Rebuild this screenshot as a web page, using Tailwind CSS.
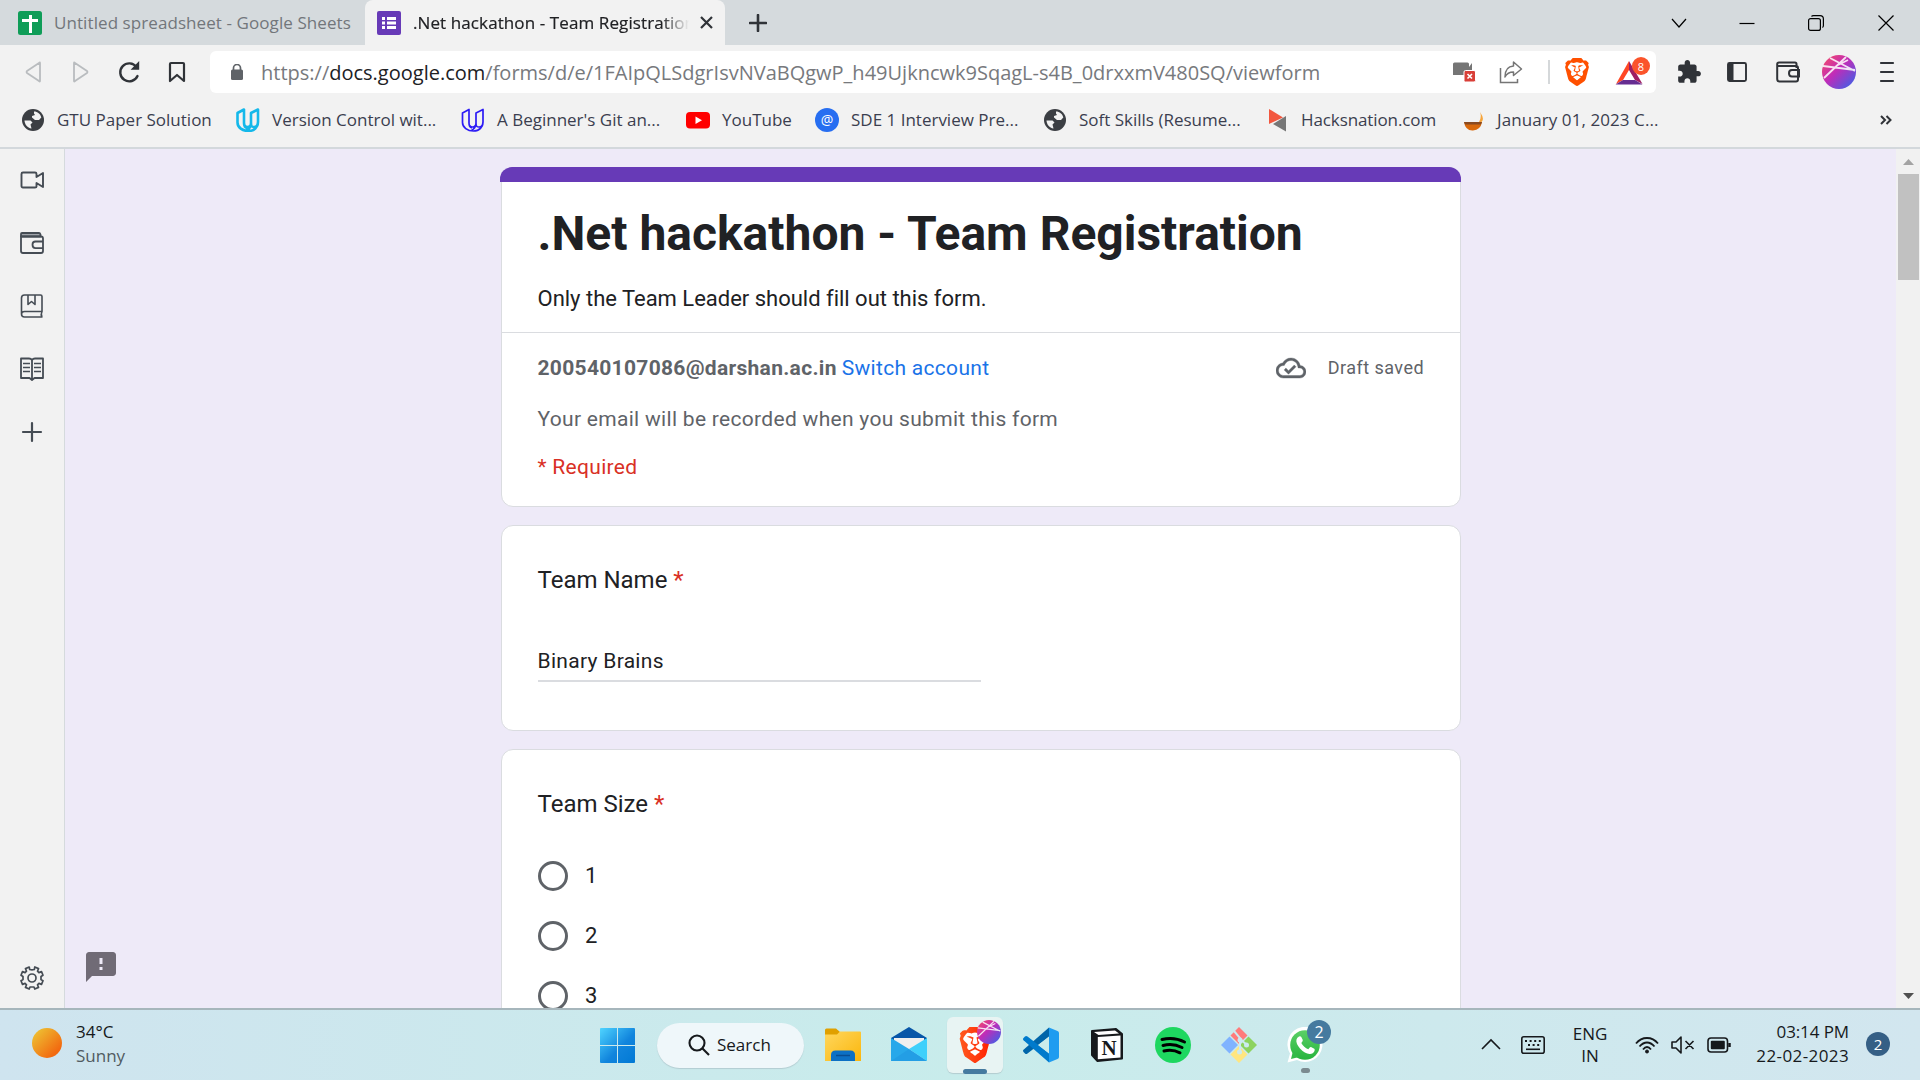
<!DOCTYPE html>
<html lang="en">
<head>
<meta charset="utf-8">
<title>.Net hackathon - Team Registration</title>
<script src="https://cdn.jsdelivr.net/npm/@tailwindcss/browser@4"></script>
</head>
<body class="h-[1080px] w-[1920px] overflow-hidden font-['Open_Sans','Noto_Sans',sans-serif] text-[#3b3e4f]">
<svg class="absolute h-0 w-0">
  <defs>
    <linearGradient id="av" x1="0" y1="0" x2="1" y2="1"><stop offset="0" stop-color="#fa4d60"/><stop offset=".45" stop-color="#c02cb8"/><stop offset="1" stop-color="#2c68ee"/></linearGradient>
    <linearGradient id="br" x1="0" x2="1"><stop offset="0" stop-color="#ff5a1f"/><stop offset="1" stop-color="#ff2000"/></linearGradient>
    <linearGradient id="sun" x1="0" y1="0" x2="1" y2="1"><stop offset=".1" stop-color="#eec032"/><stop offset=".8" stop-color="#f26a10"/></linearGradient>
    <linearGradient id="win" x1="0" y1="0" x2="36" y2="36" gradientUnits="userSpaceOnUse"><stop offset="0" stop-color="#4fd4ff"/><stop offset=".55" stop-color="#1185dd"/><stop offset="1" stop-color="#0078d4"/></linearGradient>
    <linearGradient id="fold" x1="0" y1="0" x2="1" y2="1"><stop offset="0" stop-color="#ffd75e"/><stop offset="1" stop-color="#fbb60c"/></linearGradient>
    <linearGradient id="wa" x1="0" y1="0" x2="0" y2="1"><stop offset="0" stop-color="#5bd066"/><stop offset="1" stop-color="#27b43e"/></linearGradient>
  </defs>
  <symbol id="lion" viewBox="0 0 24 24"><path fill="#fff" d="M5 4h14l1.500 5-3 9-5.500 3-5.500-3-3-9z"/><path d="M15.68 0l2.096 2.38s1.84-.512 2.709.358c.868.87 1.584 1.638 1.584 1.638l-.562 1.381.715 2.047s-2.104 7.98-2.35 8.955c-.486 1.919-.818 2.66-2.198 3.633-1.38.972-3.884 2.66-4.293 2.916-.409.256-.92.692-1.38.692-.46 0-.97-.436-1.38-.692a185.796 185.796 0 01-4.293-2.916c-1.38-.973-1.712-1.714-2.197-3.633-.247-.975-2.351-8.955-2.351-8.955l.715-2.047-.562-1.381s.716-.768 1.585-1.638c.868-.87 2.708-.358 2.708-.358L8.321 0h7.36zm-3.679 14.936c-.14 0-1.038.317-1.758.69-.72.373-1.242.637-1.409.742-.167.104-.065.301.087.409.152.107 2.194 1.69 2.393 1.866.198.175.489.464.687.464.198 0 .49-.29.688-.464.198-.175 2.24-1.759 2.392-1.866.152-.108.254-.305.087-.41-.167-.104-.689-.368-1.41-.741-.72-.373-1.617-.69-1.757-.69zm0-11.278s-.409.001-1.022.206-1.278.46-1.584.46c-.307 0-2.581-.434-2.581-.434S4.119 7.152 4.119 7.849c0 .697.339.881.68 1.243l2.02 2.149c.192.203.59.511.356 1.066-.235.555-.58 1.26-.196 1.977.384.716 1.042 1.194 1.464 1.115.421-.08 1.412-.598 1.776-.834.364-.237 1.518-1.19 1.518-1.554 0-.365-1.193-1.02-1.413-1.168-.22-.15-1.226-.725-1.247-.95-.02-.227-.012-.293.284-.851.297-.559.831-1.304.742-1.8-.089-.495-.95-.753-1.565-.986-.615-.232-1.799-.671-1.947-.74-.148-.068-.11-.133.339-.175.448-.043 1.719-.212 2.292-.052.573.16 1.552.403 1.632.532.079.13.149.134.067.579-.081.445-.5 2.581-.541 2.96-.04.38-.12.63.288.724.409.094 1.097.256 1.333.256s.924-.162 1.333-.256c.408-.093.329-.344.288-.723-.04-.38-.46-2.516-.541-2.961-.082-.445-.012-.45.067-.579.08-.129 1.059-.372 1.632-.532.573-.16 1.845.009 2.292.052.449.042.487.107.339.175-.148.069-1.332.508-1.947.74-.615.233-1.476.49-1.565.986-.09.496.445 1.241.742 1.8.297.558.304.624.284.85-.02.226-1.026.802-1.247.95-.22.15-1.413.804-1.413 1.169 0 .364 1.154 1.317 1.518 1.554.364.236 1.355.755 1.776.834.422.079 1.08-.4 1.464-1.115.384-.716.039-1.422-.195-1.977-.235-.555.163-.863.355-1.066l2.02-2.149c.341-.362.68-.546.68-1.243 0-.697-2.695-3.96-2.695-3.96s-2.274.436-2.58.436c-.307 0-.972-.256-1.585-.461-.613-.205-1.022-.206-1.022-.206z"/></symbol>
  <symbol id="avatar" viewBox="0 0 34 34"><circle cx="17" cy="17" r="17" fill="url(#av)"/><path d="M2 23 24 2M8 3l25 13M1 11l32 4M14 11l12-6" stroke="#fff" stroke-opacity=".85" stroke-width="1.800" fill="none"/></symbol>
  <symbol id="globe" viewBox="0 0 24 24"><circle cx="12" cy="12" r="11" fill="#3b3e43"/><path d="M3.500 12.500h6l2 2-2 2 1 4C6.500 20 3.700 16.500 3.500 12.500zM13 3.500c3.500 0 6.500 2.500 7.300 6L18 12h-4l-3-2.500V8l3-1-1-1.500z" fill="#f2f2f2"/></symbol>
  <symbol id="udemy" viewBox="0 0 24 24"><path d="M1.500 5 8 1.500V15c0 2.500 1.500 4 3.500 4s3.500-1.500 3.500-4V5l7-3.500V14c0 5-3.500 9-9.500 9S1.500 19.500 1.500 14.500zM15 5v10c0 4-2 6-4.500 7.500M8 15c0 3 1 4.500 3 5M22 14c0 3-1.500 5-4 5s-3-1-3-4" fill="none" stroke="currentColor" stroke-linejoin="round"/></symbol>
</svg>
<div class="flex h-full flex-col">
  <!-- tab strip -->
  <div class="flex h-[45px] shrink-0 items-center bg-[#d5dadd]">
    <div class="flex h-full w-[365px] items-center pl-[18px]">
      <svg class="h-6 w-6 shrink-0" viewBox="0 0 24 24"><rect width="24" height="24" rx="2.500" fill="#0f9d58"/><path d="M11 4h3v4h6v3h-6v11h-3V11H4V8h7z" fill="#fff"/></svg>
      <span class="ml-3 w-[300px] text-[17px] tracking-[0.08px] whitespace-nowrap text-[#72767b]">Untitled spreadsheet - Google Sheets</span>
    </div>
    <div class="flex h-full w-[360px] items-center rounded-t-lg bg-[#f2f2f2] pl-3">
      <svg class="h-6 w-6 shrink-0" viewBox="0 0 24 24"><rect width="24" height="24" rx="2" fill="#673ab7"/><path d="M5 6h3v3H5zm5 0h9v3h-9zM5 10.500h3v3H5zm5 0h9v3h-9zM5 15h3v3H5zm5 0h9v3h-9z" fill="#fff"/></svg>
      <div class="ml-3 w-[276px] overflow-hidden mask-r-from-90% mask-r-to-100%"><span class="text-[17px] tracking-[0.1px] whitespace-nowrap text-[#202124] [-webkit-text-stroke:0.2px]">.Net hackathon - Team Registration</span></div>
      <svg class="ml-[10px] h-[15px] w-[15px]" viewBox="0 0 15 15" stroke="#303338" stroke-width="2.200"><path d="m2 2 11 11M13 2 2 13"/></svg>
    </div>
    <svg class="ml-6 h-[18px] w-[18px]" viewBox="0 0 18 18" stroke="#303338" stroke-width="2.600" stroke-linecap="round"><path d="M9 1v16M1 9h16"/></svg>
    <div class="ml-auto flex items-center pr-[26px] text-black">
      <svg class="mr-[52px] h-4 w-4" viewBox="0 0 16 16" fill="none" stroke="#000" stroke-width="1.200"><path d="m1 4 7 8 7-8"/></svg>
      <svg class="mr-[53px] h-4 w-4" viewBox="0 0 16 16" stroke="#000" stroke-width="1.200"><path d="M.5 8.500h15"/></svg>
      <svg class="mr-[54px] h-4 w-4" viewBox="0 0 16 16" fill="none" stroke="#000" stroke-width="1.200"><rect x=".6" y="3.600" width="11.800" height="11.800" rx="2"/><path d="M3.500 1.600Q4 .6 5.500.6H12Q15.400.6 15.400 4v6.500q0 1.500-1 2"/></svg>
      <svg class="h-4 w-4" viewBox="0 0 16 16" stroke="#000" stroke-width="1.200"><path d="m.5.500 15 15M15.500.5l-15 15"/></svg>
    </div>
  </div>
  <!-- toolbar -->
  <div class="flex h-[54px] shrink-0 items-center bg-[#f2f2f2]">
    <div class="flex w-[210px] items-center gap-6 pl-[21px]">
      <svg class="h-6 w-6" viewBox="0 0 24 24" fill="none" stroke="#b9bcbf" stroke-width="1.800" stroke-linejoin="round"><path d="M19 3v18q0 1-1 0L6 13q-1-1 0-2L18 3q1-1 1 0z"/></svg>
      <svg class="h-6 w-6" viewBox="0 0 24 24" fill="none" stroke="#b9bcbf" stroke-width="1.800" stroke-linejoin="round"><path d="M5 3v18q0 1 1 0l12-8q1-1 0-2L6 3Q5 2 5 3z"/></svg>
      <svg class="h-6 w-6" viewBox="0 0 24 24" fill="none" stroke="#303338" stroke-width="2.400" stroke-linecap="round"><path d="M20.500 16A9 9 0 1 1 19.500 7"/><path d="M21 4v4.500h-4.500z" fill="#303338"/></svg>
      <svg class="h-6 w-6" viewBox="0 0 24 24" fill="none" stroke="#303338" stroke-width="2.200" stroke-linejoin="round"><path d="M5 4q0-1 1-1h12q1 0 1 1v17l-7-6-7 6z"/></svg>
    </div>
    <div class="flex h-[42px] w-[1446px] items-center rounded-md bg-white">
      <svg class="ml-[19px] h-4 w-4" viewBox="0 0 16 16"><rect x="2" y="5.500" width="12" height="10.500" rx="1.500" fill="#5f6368"/><path d="M4.500 7V4a3.500 3.500 0 0 1 7 0v3" fill="none" stroke="#5f6368" stroke-width="1.700"/></svg>
      <span class="ml-4 w-[1191px] pt-[2px] text-[20px] whitespace-nowrap text-[#77797d]">https://<span class="text-[#202124]">docs.google.com</span>/forms/d/e/1FAIpQLSdgrIsvNVaBQgwP_h49Ujkncwk9SqagL-s4B_0drxxmV480SQ/viewform</span>
      <svg class="h-6 w-6" viewBox="0 0 24 24"><path d="M1 4Q1 2.500 2.500 2.500h13Q17 2.500 17 4v3l3-4v12H1z" fill="#757575"/><rect x="12" y="10.500" width="11.500" height="11.500" rx="1.500" fill="#d93f38" stroke="#fff"/><path d="m15.500 14 4.500 4.500m0-4.500-4.500 4.500" stroke="#fff" stroke-width="1.600"/></svg>
      <svg class="ml-[23px] h-6 w-6" viewBox="0 0 24 24" fill="none" stroke="#757575" stroke-width="1.500"><path d="M1.500 8v14.500h17V19"/><path d="M14.500 2 22.500 9l-8 6.500V12Q8.500 12 6 17q0-10.500 8.500-11z" stroke-linejoin="round"/></svg>
      <div class="ml-[25px] h-6 w-[2px] bg-[#d5d8da]"></div>
      <svg class="ml-[13px] h-[28px] w-[28px]" viewBox="0 0 24 24" fill="#ff5000"><use href="#lion"/></svg>
      <div class="relative ml-[23px] h-[30px] w-[36px]">
        <svg class="h-[30px] w-[30px]" viewBox="0 0 30 30"><path d="M15 4v9l-6 10-7 4z" fill="#ff4724"/><path d="M15 4l13.500 23-7.500-4-6-10z" fill="#9e1f63"/><path d="M1.500 27.500h27L21 23H9z" fill="#662d91"/></svg>
        <span class="absolute top-0 left-[18px] flex h-[18px] w-[18px] items-center justify-center rounded-full bg-[#fb542b] text-[11px] leading-none text-white">8</span>
      </div>
    </div>
    <div class="flex items-center pl-[20px]">
      <svg class="h-[26px] w-[26px]" viewBox="0 0 24 24" fill="#303338"><path d="M20.500 11H19V7c0-1.100-.9-2-2-2h-4V3.500C13 2.120 11.880 1 10.500 1S8 2.120 8 3.500V5H4c-1.100 0-1.990.9-1.990 2v3.800H3.500c1.490 0 2.700 1.210 2.700 2.700s-1.210 2.700-2.700 2.700H2V20c0 1.100.9 2 2 2h3.800v-1.500c0-1.490 1.210-2.700 2.700-2.700 1.490 0 2.700 1.210 2.700 2.700V22H17c1.100 0 2-.9 2-2v-4h1.500c1.380 0 2.500-1.120 2.500-2.500S21.880 11 20.500 11z"/></svg>
      <svg class="ml-[24px] h-[22px] w-[22px]" viewBox="0 0 22 22"><rect x="2" y="2" width="18" height="18" rx="1.500" fill="none" stroke="#303338" stroke-width="1.900"/><path d="M2 2h5.500v18H2z" fill="#303338"/></svg>
      <svg class="ml-[28px] h-6 w-6" viewBox="0 0 24 24" fill="none" stroke="#303338" stroke-width="2"><path d="M20.500 8V4q0-1.500-1.500-1.500H3Q1.200 2.500 1.200 4.200V19q0 2.500 2.500 2.500H20q2 0 2-2V8Q22 6 20 6H2"/><path d="M23 10h-7q-3 0-3 3.200t3 3.200h7z"/></svg>
      <svg class="ml-[22px] h-[34px] w-[34px]" viewBox="0 0 34 34"><use href="#avatar"/></svg>
      <svg class="ml-[23px] h-6 w-4" viewBox="0 0 16 24" stroke="#303338" stroke-width="2.200" stroke-linecap="round"><path d="M2 3h12M2 12h12M2 21h12" /></svg>
    </div>
  </div>
  <!-- bookmarks -->
  <div class="flex h-[50px] shrink-0 items-center gap-[25px] border-b-2 border-[#d3d8dc] bg-[#f2f2f2] pr-[28px] pb-[6px] pl-[21px] text-[17px] whitespace-nowrap">
    <div class="flex items-center gap-3"><svg class="h-6 w-6"><use href="#globe"/></svg><span class="w-[154px]">GTU Paper Solution</span></div>
    <div class="flex items-center gap-3"><svg class="h-6 w-6 text-[#14b8ea]" stroke-width="2.600"><use href="#udemy"/></svg><span class="w-[164px]">Version Control wit...</span></div>
    <div class="flex items-center gap-3"><svg class="h-6 w-6 text-[#2d1cf5]" stroke-width="1.700"><use href="#udemy"/></svg><span class="w-[164px]">A Beginner's Git an...</span></div>
    <div class="flex items-center gap-3"><svg class="h-6 w-6" viewBox="0 0 24 24"><rect y="4" width="24" height="16.500" rx="4" fill="#f00"/><path d="m9.500 8.500 6.500 3.700-6.500 3.700z" fill="#fff"/></svg><span class="w-[68px]">YouTube</span></div>
    <div class="flex items-center gap-3"><span class="flex h-6 w-6 items-center justify-center rounded-full bg-[#276ef1] pb-px text-[14px] leading-none text-white">@</span><span class="w-[167px]">SDE 1 Interview Pre...</span></div>
    <div class="flex items-center gap-3"><svg class="h-6 w-6"><use href="#globe"/></svg><span class="w-[162px]">Soft Skills (Resume...</span></div>
    <div class="flex items-center gap-3"><svg class="h-6 w-6" viewBox="0 0 24 24"><path d="M3 1l14 8.500L3 16z" fill="#f2573f"/><path d="M20 8v15.500L7 16z" fill="#777"/></svg><span class="-ml-px w-[134px] tracking-[-0.1px]">Hacksnation.com</span></div>
    <div class="flex items-center gap-3"><svg class="h-6 w-6" viewBox="0 0 24 24"><path d="M4 14h18q-1.500 8-9 8.500T4 14z" fill="#d9690b"/><path d="M4 14h18l-1 2.500H5z" fill="#8a4a20"/><path d="M19 14q3-5 1-10 5 7 1.500 10z" fill="#f7a53a"/></svg><span class="ml-px w-[163px] tracking-[0.08px]">January 01, 2023 C...</span></div>
    <svg class="ml-auto h-3 w-3" viewBox="0 0 12 12" fill="none" stroke="#303338" stroke-width="2"><path d="m1 2 4 4-4 4M6.500 2l4 4-4 4"/></svg>
  </div>
  <!-- main area -->
  <div class="flex h-[859px] shrink-0">
    <div class="flex w-[65px] flex-col items-center border-r border-[#d5dadd] bg-[#f2f2f2] pt-[19px] pb-[18px]">
      <svg class="h-6 w-6" viewBox="0 0 24 24" fill="none" stroke="#454c54" stroke-width="1.900" stroke-linejoin="round"><path d="M3 4.500h12q1.500 0 1.500 1.500v3L23 5v14l-6.500-4v3.500q0 1-1.500 1H3q-1.500 0-1.500-1.500V6q0-1.500 1.500-1.500z"/></svg>
      <svg class="mt-[39px] h-6 w-6" viewBox="0 0 24 24" fill="none" stroke="#454c54" stroke-width="1.800" stroke-linejoin="round"><path d="M1 3q0-1 1-1h17q1 0 1.500 1.500V5.500H1z" fill="#a0a4aa"/><path d="M1 5.500h20q2 0 2 2V20q0 2-2 2H3q-2 0-2-2z"/><path d="M23 10.500h-7.500q-3 0-3 3.300t3 3.300H23"/></svg>
      <svg class="mt-[39px] h-6 w-6" viewBox="0 0 24 24" fill="none" stroke="#454c54" stroke-width="1.600" stroke-linejoin="round"><path d="M22 17.500V2.500Q22 1 20.500 1h-16Q1.500 1 1.500 4v16q0 3 3 3H22.500M1.500 20q0-2.500 3-2.500H22q-1.500 3 0 5.500M8 1v9.500l3.500-3 3.500 3V1"/></svg>
      <svg class="mt-[39px] h-6 w-6" viewBox="0 0 24 24" fill="none" stroke="#454c54" stroke-width="1.600" stroke-linejoin="round"><path d="M12 3q-1-1.500-3-1.500H1v19.500h8.500L12 23l2.500-2H23V1.500h-8Q13 1.500 12 3zM12 3v19" stroke-width="1.800"/><path d="M3 6.500h7M3 10.500h7M3 14.500h7M14 6.500h7M14 10.500h7M14 14.500h7"/></svg>
      <svg class="mt-[39px] h-6 w-6" viewBox="0 0 24 24" stroke="#454c54" stroke-width="2.200" stroke-linecap="round"><path d="M12 3v18M3 12h18"/></svg>
      <svg class="mt-auto h-6 w-6" viewBox="0 0 24 24" fill="none" stroke="#454c54" stroke-width="1.700" stroke-linejoin="round"><circle cx="12" cy="12" r="4"/><path d="M9.700 3.500 9.200 1 5.500 2.600l1 2.600-1.400 1.400-2.600-1L1 9.300l2 1.200v3L1 14.700l1.500 3.700 2.600-1 1.400 1.400-1 2.600L9.200 23l.8-2h4l.8 2 3.700-1.600-1-2.600 1.400-1.400 2.600 1L23 14.700l-2-1.200v-3l2-1.200-1.500-3.700-2.600 1-1.400-1.400 1-2.600L14.800 1l-.5 2.500Q12 4.300 9.700 3.500z"/></svg>
    </div>
    <div class="relative flex w-[1831px] flex-col gap-[18px] overflow-hidden bg-[#eeeaf8] pt-[18px] pl-[436px] font-['Roboto',sans-serif] text-[#202124]">
      <div class="relative h-[340px] w-[960px] shrink-0 rounded-xl border border-[#dadce0] bg-white pt-[36px]">
        <div class="absolute -top-px -left-[2px] h-[15px] w-[961px] rounded-t-xl bg-[#673ab7]"></div>
        <h1 class="pl-[35.5px] text-[48px] leading-[60px] font-bold whitespace-nowrap">.Net hackathon - Team Registration</h1>
        <p class="mt-[20px] pl-[35.5px] text-[22px] leading-[30px] tracking-[-0.01px]">Only the Team Leader should fill out this form.</p>
        <div class="mt-[18px] h-px bg-[#dadce0]"></div>
        <div class="mt-5 flex items-center pr-[36px] pl-[35.5px] text-[21px] leading-[30px] tracking-[0.3px] text-[#5f6368]">
          <span class="font-bold">200540107086@darshan.ac.in</span>
          <span class="ml-[5px] text-[#1a73e8]">Switch account</span>
          <svg class="ml-auto h-[30px] w-[30px]" viewBox="0 0 24 24" fill="#5f6368" stroke="#5f6368" stroke-width=".3"><path d="M19.350 10.040C18.670 6.590 15.640 4 12 4 9.110 4 6.600 5.640 5.350 8.040 2.340 8.360 0 10.910 0 14c0 3.310 2.690 6 6 6h13c2.760 0 5-2.240 5-5 0-2.640-2.050-4.780-4.650-4.960zM19 18H6c-2.210 0-4-1.790-4-4 0-2.050 1.530-3.760 3.560-3.970l1.070-.11.500-.95C8.080 7.140 9.940 6 12 6c2.620 0 4.880 1.860 5.390 4.430l.3 1.500 1.530.11c1.560.1 2.780 1.410 2.780 2.960 0 1.650-1.350 3-3 3zm-9-3.820-2.090-2.090L6.500 13.500 10 17l6.010-6.010-1.410-1.410z"/></svg>
          <span class="ml-[22px] text-[18px] tracking-[0.45px]">Draft saved</span>
        </div>
        <p class="mt-[21px] pl-[35.5px] text-[21px] leading-[30px] tracking-[0.3px] text-[#5f6368]">Your email will be recorded when you submit this form</p>
        <p class="mt-[18px] pl-[35.5px] text-[21px] leading-[30px] tracking-[0.3px] text-[#d93025]">* Required</p>
      </div>
      <div class="h-[206px] w-[960px] shrink-0 rounded-xl border border-[#dadce0] bg-white px-9 pt-[36px]">
        <div class="-ml-[0.5px] text-[24px] leading-[36px]">Team Name <span class="text-[#d93025]">*</span></div>
        <div class="mt-[48px] h-[36px] w-[443px] border-b-2 border-[#dadce0] text-[21px] leading-[30px] tracking-[0.3px]"><span class="-ml-[0.5px]">Binary Brains</span></div>
      </div>
      <div class="h-[400px] w-[960px] shrink-0 rounded-xl border border-[#dadce0] bg-white px-9 pt-[36px]">
        <div class="-ml-[0.5px] text-[24px] leading-[36px]">Team Size <span class="text-[#d93025]">*</span></div>
        <div class="mt-[24px] text-[22px]">
          <div class="flex h-[60px] items-center gap-[17px]"><span class="h-[30px] w-[30px] rounded-full border-3 border-[#5f6368]"></span><span class="leading-[30px]">1</span></div>
          <div class="flex h-[60px] items-center gap-[17px]"><span class="h-[30px] w-[30px] rounded-full border-3 border-[#5f6368]"></span><span class="leading-[30px]">2</span></div>
          <div class="flex h-[60px] items-center gap-[17px]"><span class="h-[30px] w-[30px] rounded-full border-3 border-[#5f6368]"></span><span class="leading-[30px]">3</span></div>
        </div>
      </div>
      <svg class="absolute top-[800px] left-[18px] h-[36px] w-[36px]" viewBox="0 0 24 24" fill="#706b76"><path d="M20 2H4c-1.100 0-1.990.9-1.990 2L2 22l4-4h14c1.100 0 2-.9 2-2V4c0-1.100-.9-2-2-2zm-7 12h-2v-2h2v2zm0-4h-2V6h2v4z"/></svg>
    </div>
    <div class="flex w-6 flex-col items-center bg-[#f1f1f1] pt-[10px] pb-[9px]">
      <svg class="h-[6px] w-[11px]" viewBox="0 0 11 6" fill="#a3a3a3"><path d="M0 6 5.500 0 11 6z"/></svg>
      <div class="mt-[9px] h-[106px] w-[21px] bg-[#c1c1c1]"></div>
      <svg class="mt-auto h-[6px] w-[11px]" viewBox="0 0 11 6" fill="#505050"><path d="M0 0 5.500 6 11 0z"/></svg>
    </div>
  </div>
  <!-- taskbar -->
  <div class="flex h-[72px] shrink-0 items-center border-t-2 border-[#a6b6bc] bg-linear-to-r from-[#cfe4ef] via-[#c8eceb] to-[#d2e6ef] text-[17px] text-[#16191c]">
    <svg class="ml-8 h-[30px] w-[30px] -mt-1" viewBox="0 0 30 30"><circle cx="15" cy="15" r="15" fill="url(#sun)"/></svg>
    <div class="ml-[14px] w-[524px] pb-[3px] leading-[24px]"><div>34°C</div><div class="text-[#515b61]">Sunny</div></div>
    <svg class="h-[35px] w-[35px]" viewBox="0 0 35 35" fill="url(#win)"><path d="M1 0h16v17H0V1q0-1 1-1zM18 0h16q1 0 1 1v16H18zM0 18h17v17H1q-1 0-1-1zM18 18h17v16q0 1-1 1H18z"/></svg>
    <div class="ml-[22px] flex h-[45px] w-[147px] items-center rounded-full bg-[#eff7fa] pl-[31px] shadow-[0_1px_1px_#b3cdd2]">
      <svg class="h-[22px] w-[22px]" viewBox="0 0 22 22" fill="none" stroke="#16191c" stroke-width="2.100"><circle cx="9" cy="9" r="7.500"/><path d="m14.500 14.500 6.500 6.500"/></svg>
      <span class="ml-[7px]">Search</span>
    </div>
    <svg class="ml-[21px] h-9 w-9" viewBox="0 0 36 36"><path d="M0 3q0-1.500 1.500-1.500H11L15 5v5H0z" fill="#e0a000"/><path d="M0 7.500h12l3-3h20q1 0 1 1V34H0z" fill="url(#fold)"/><path d="M6 34v-6q0-4.500 4.500-4.500h15Q30 23.500 30 28v6z" fill="#0c70c4"/><path d="M11 28.500h14" stroke="#084d92" stroke-width="1.500"/></svg>
    <svg class="ml-[30px] h-9 w-9" viewBox="0 0 36 36"><path d="M0 11 18 0l18 11v6H0z" fill="#0756a8"/><path d="M3 11h30v9L18 27 3 20z" fill="#efefef"/><path d="M0 11l18 11 18 12H0z" fill="#28a8ea"/><path d="M36 11 18 22l18 12z" fill="#3fd0fb"/><path d="M0 34l18-12 18 12z" fill="#1e93e0" opacity=".5"/></svg>
    <div class="relative ml-[20px] flex h-[56px] w-[56px] items-center rounded-md bg-[#e8f4f3] pl-[10px] shadow-[0_1px_1px_#b3cdd0]">
      <svg class="h-9 w-9" viewBox="0 0 24 24" fill="url(#br)"><use href="#lion"/></svg>
      <svg class="absolute top-[3px] left-[30px] h-6 w-6"><use href="#avatar"/></svg>
      <div class="absolute bottom-[-1px] left-4 h-[5px] w-6 rounded-full bg-[#457a9f]"></div>
    </div>
    <svg class="ml-[20px] h-9 w-9" viewBox="0 0 36 36"><path d="M27 9 4.500 26.500Q3 27.500 2 26.500L.5 25q-1-1.200 0-2.300L26 .500z" fill="#0065a9"/><path d="M27 27 4.500 9.500Q3 8.500 2 9.500L.5 11q-1 1.200 0 2.300L26 35.500z" fill="#007acc"/><path d="M26 .500 34.500 4Q36 4.700 36 6v24q0 1.300-1.500 2L26 35.500z" fill="#1f9cf0"/><path d="M26 9.500v17L15 18z" fill="#cbeceb"/></svg>
    <svg class="ml-[32px] h-[34px] w-8" viewBox="0 0 32 34"><path d="M1 3 25 1l6 5v24.500L6.500 33 1 27z" fill="#16191c" stroke="#16191c" stroke-width="2" stroke-linejoin="round"/><path d="M3 4 24 2.500 28 5.500 7.500 7zM6.800 9 29.500 7.500v22L6.800 31.300z" fill="#fff"/><text x="18" y="27" font-family="Liberation Serif" font-size="21" font-weight="bold" text-anchor="middle" fill="#16191c">N</text></svg>
    <svg class="ml-[32px] h-9 w-9" viewBox="0 0 36 36"><circle cx="18" cy="18" r="18" fill="#1ed760"/><path d="M7 12.500q12-3 22.500 2.500M8 18.500q10-2.500 19 2M9 24q8.500-2 16 1.800" fill="none" stroke="#000" stroke-width="3" stroke-linecap="round"/></svg>
    <svg class="ml-[30px] h-9 w-9" viewBox="0 0 36 36"><path d="M18 0l8.500 8.500-8.500 8.500-8.500-8.500z" fill="#ff7b7b"/><path d="M8.500 9.500 17 18l-8.500 8.500L0 18z" fill="#80b3ff"/><path d="M27.500 9.500 36 18l-8.500 8.500L19 18z" fill="#8dd35f"/><path d="M18 19l8.500 8.500L18 36l-8.500-8.500z" fill="#ffe680"/><path d="M13 4l6 7v14M19 12l7 6" stroke="#cdeaf0" stroke-width="2" fill="none"/><circle cx="19" cy="13" r="2.500" fill="#cdeaf0"/><circle cx="25.500" cy="18" r="2.500" fill="#cdeaf0"/><circle cx="18.500" cy="25" r="2.500" fill="#cdeaf0"/></svg>
    <div class="relative ml-[30px] h-9 w-9">
      <svg class="h-9 w-9" viewBox="0 0 36 36"><path d="M.5 35.500 3 26.500A17.500 17.500 0 1 1 10 33z" fill="#fff"/><circle cx="18" cy="18" r="14.800" fill="url(#wa)"/><path d="M4 32l2-8 6 6z" fill="#34ba49"/><path d="M12 9.500q1.500-.8 2.300.6l1.500 3q.3.900-1.500 2.900 2.500 4.500 7 6.200 1.800-2.500 2.700-2.200l3.300 1.700q.8.500.2 2.300-1.300 3-4.800 2.900Q18 27 13 21.500 8.500 16 9.500 12.500 10 10.500 12 9.500z" fill="#fff"/></svg>
      <span class="absolute -top-[7px] left-5 flex h-6 w-6 items-center justify-center rounded-full bg-[#457a9f] text-[16px] leading-none text-white">2</span>
      <div class="absolute top-[41px] left-[14px] h-[5px] w-[9px] rounded-full bg-[#7b8b90]"></div>
    </div>
    <svg class="ml-auto h-5 w-5 shrink-0" viewBox="0 0 20 20" fill="none" stroke="#16191c" stroke-width="1.600"><path d="m1 14 9-9 9 9"/></svg>
    <svg class="ml-5 h-[18px] w-6" viewBox="0 0 24 18" fill="none" stroke="#16191c" stroke-width="1.600"><rect x=".8" y=".8" width="22.400" height="16.400" rx="2"/><path d="M4 5h17M7 9h12" stroke-dasharray="2 2.600" stroke-width="2"/><path d="M5 13.300h14"/></svg>
    <div class="ml-[25px] w-10 text-center leading-[22px]">ENG<br>IN</div>
    <svg class="ml-[25px] h-6 w-6" viewBox="0 0 24 24" fill="none" stroke="#16191c" stroke-width="1.800"><path d="M1 10.500Q5.500 5 12 5t11 5.500M4.500 13.500Q8 9.500 12 9.500t7.500 4M8 16.500Q10 14 12 14t4 2.500"/><circle cx="12" cy="18.500" r="1.500" fill="#16191c" stroke-width="1"/></svg>
    <svg class="ml-3 h-6 w-6" viewBox="0 0 24 24" fill="none" stroke="#16191c" stroke-width="1.600" stroke-linejoin="round"><path d="M1 9h4l5-5v16l-5-5H1zM14.500 8l8 8m0-8-8 8"/></svg>
    <svg class="ml-3 h-6 w-6" viewBox="0 0 24 24" fill="none" stroke="#16191c" stroke-width="1.600"><rect x="1" y="5" width="19.500" height="14" rx="3"/><rect x="3.800" y="7.800" width="14" height="8.400" rx="1" fill="#16191c" stroke="none"/><path d="M22.500 10v4" stroke-width="2.500"/></svg>
    <div class="ml-4 w-[102px] pb-[3px] text-right leading-6 whitespace-nowrap"><span class="tracking-[-0.1px]">03:14 PM</span><br><span class="tracking-[0.4px]">22-02-2023</span></div>
    <span class="mr-[30px] ml-[17px] flex h-6 w-6 shrink-0 -mt-[2px] items-center justify-center rounded-full bg-[#355f85] text-[15px] leading-none text-white">2</span>
  </div>
</div>
</body>
</html>
